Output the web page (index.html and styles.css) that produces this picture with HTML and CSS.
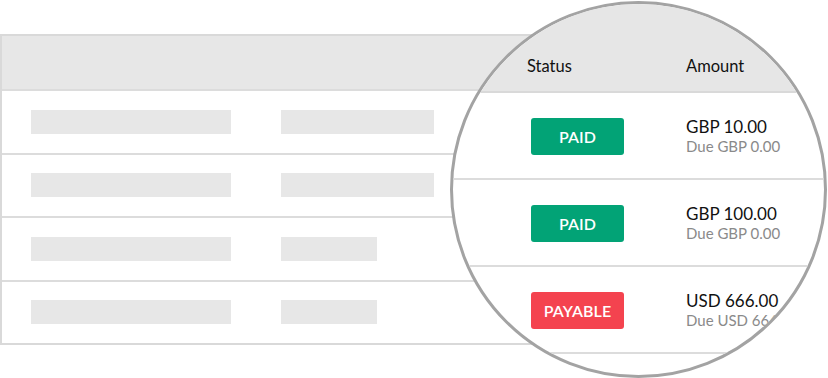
FILE: index.html
```html
<!DOCTYPE html>
<html lang="en">
<head>
<meta charset="utf-8">
<title>Invoices</title>
<link rel="stylesheet" href="styles.css">
</head>
<body>
<div class="scene">
  <div class="table">
    <div class="table-head"></div>
    <div class="table-row">
      <span class="bar bar-wide"></span>
      <span class="bar bar-mid"></span>
    </div>
    <div class="table-row">
      <span class="bar bar-wide"></span>
      <span class="bar bar-mid"></span>
    </div>
    <div class="table-row">
      <span class="bar bar-wide"></span>
      <span class="bar bar-short"></span>
    </div>
    <div class="table-row">
      <span class="bar bar-wide"></span>
      <span class="bar bar-short"></span>
    </div>
  </div>

  <div class="lens">
    <div class="lens-head">
      <span class="col-status">Status</span>
      <span class="col-amount">Amount</span>
    </div>
    <div class="lens-row">
      <div class="col-status"><span class="badge badge-paid">PAID</span></div>
      <div class="col-amount">
        <div class="amount">GBP 10.00</div>
        <div class="due">Due GBP 0.00</div>
      </div>
    </div>
    <div class="lens-row">
      <div class="col-status"><span class="badge badge-paid">PAID</span></div>
      <div class="col-amount">
        <div class="amount">GBP 100.00</div>
        <div class="due">Due GBP 0.00</div>
      </div>
    </div>
    <div class="lens-row">
      <div class="col-status"><span class="badge badge-payable">PAYABLE</span></div>
      <div class="col-amount">
        <div class="amount">USD 666.00</div>
        <div class="due">Due USD 666.00</div>
      </div>
    </div>
  </div>
</div>
</body>
</html>
```

FILE: styles.css
```css
* {
  box-sizing: border-box;
}

html, body {
  margin: 0;
  background: #ffffff;
}

body {
  width: 828px;
  height: 378px;
  overflow: hidden;
  font-family: "Lato", "Liberation Sans", sans-serif;
  color: #1a1a1a;
}

.scene {
  position: relative;
  height: 378px;
  padding-top: 34px;
}

/* Faded background table */
.table {
  width: 700px;
  border: 2px solid #d9d9d9;
  border-right: none;
}

.table-head {
  height: 55px;
  background: #e7e7e7;
  border-bottom: 2px solid #dcdcdc;
}

.table-row {
  display: flex;
  align-items: center;
  gap: 50px;
  height: 63.5px;
  padding-left: 29px;
  border-bottom: 2px solid #dcdcdc;
}

.table-row:last-child {
  height: 61px;
  border-bottom: none;
}

.bar {
  display: block;
  height: 24px;
  background: #e7e7e7;
}

.bar-wide { width: 200px; }
.bar-mid { width: 153px; }
.bar-short { width: 96px; }

/* Magnifier over the right part of the table */
.lens {
  position: absolute;
  left: 450px;
  top: 1px;
  width: 377px;
  height: 377px;
  border: 3px solid #a3a3a3;
  border-radius: 50%;
  overflow: hidden;
  background: #ffffff;
}

.lens-head,
.lens-row {
  display: grid;
  grid-template-columns: 159px 1fr;
  padding-left: 74px;
}

.lens-head {
  height: 89px;
  align-items: end;
  padding-bottom: 15px;
  background: #e6e6e6;
  border-bottom: 2px solid #d9d9d9;
  font-size: 16.5px;
  line-height: 20px;
  color: #111111;
}

.lens-row {
  height: 87px;
  align-items: center;
  padding-top: 2px;
  border-bottom: 2px solid #dcdcdc;
  white-space: nowrap;
}

.badge {
  display: flex;
  align-items: center;
  justify-content: center;
  width: 93px;
  height: 37px;
  margin-left: 4px;
  border-radius: 3px;
  color: #ffffff;
  font-size: 16px;
  font-weight: 600;
  letter-spacing: 0.1px;
}

.badge-paid {
  background: #02a376;
}

.badge-payable {
  background: #f4434f;
}

.amount {
  font-size: 17px;
  line-height: 20px;
  color: #111111;
}

.due {
  font-size: 15px;
  line-height: 19px;
  color: #8a8a8a;
}
```
